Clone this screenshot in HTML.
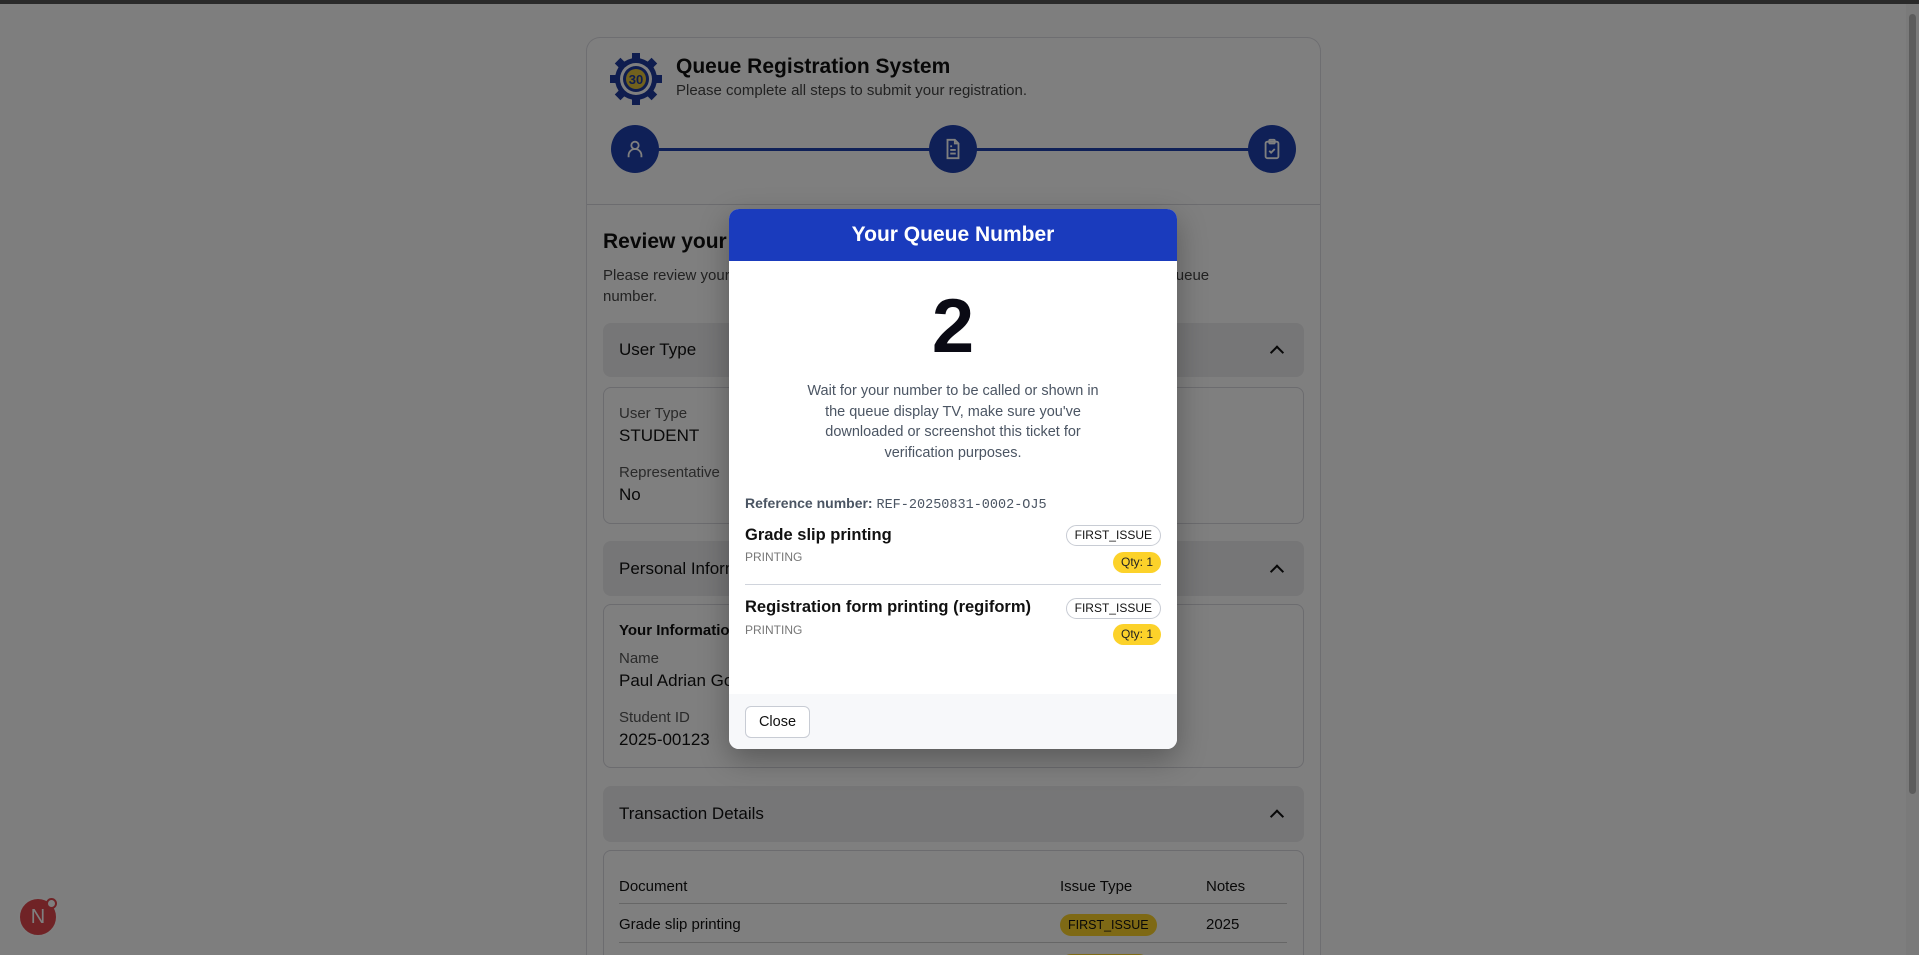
<!DOCTYPE html>
<html style="overflow:hidden;height:955px"><head><meta charset="utf-8"><style>
*{box-sizing:border-box;margin:0;padding:0}
body{width:1919px;height:955px;overflow:hidden;background:#fdfdfd;font-family:"Liberation Sans",sans-serif;color:#111;position:relative}
.topbar{position:absolute;left:0;top:0;width:1919px;height:4px;background:#555}
.scroll{position:absolute;right:0;top:4px;width:13px;height:951px;background:#f4f4f4}
.scroll div{position:absolute;left:3px;top:10px;width:7px;height:780px;background:#b8b8b8;border-radius:4px}
.card{position:absolute;left:586px;top:37px;width:735px;height:918px;border:1px solid #dcdce2;border-bottom:none;border-radius:14px 14px 0 0;background:#fff;overflow:hidden}
.abs{position:absolute}
.circle{position:absolute;width:48px;height:48px;border-radius:50%;background:#1e40af;top:87px;display:flex;align-items:center;justify-content:center}
.acc{position:absolute;left:16px;width:701px;background:#ececee;border-radius:8px;font-size:17px;padding-left:16px;display:flex;align-items:center}
.acc:after{content:"";position:absolute;right:22px;top:50%;width:8px;height:8px;border-left:2px solid #111;border-top:2px solid #111;transform:translateY(-25%) rotate(45deg)}
.box{position:absolute;left:16px;width:701px;border:1px solid #d8d8de;border-radius:8px}
.lbl{position:absolute;font-size:15px;color:#555}
.val{position:absolute;font-size:17px;color:#111}
.overlay{position:fixed;left:0;top:0;width:1919px;height:955px;background:rgba(0,0,0,.5)}
.modal{position:absolute;left:729px;top:209px;width:448px;height:540px;background:#fff;border-radius:10px;overflow:hidden;box-shadow:0 10px 30px rgba(0,0,0,.3)}
.mh{height:52px;background:#1a3bbd;color:#fff;font-weight:bold;font-size:21px;text-align:center;line-height:52px}
.badge{position:absolute;right:16px;height:21px;border-radius:11px;font-size:12px;line-height:19px;padding:0 8px}
.b1{border:1px solid #c8ccd4;color:#111;background:#fff}
.b2{background:#fcd22a;color:#222;line-height:21px}
</style></head><body>
<div class="card">
 <svg class="abs" style="left:23px;top:15px" width="52" height="52" viewBox="0 0 52 52"><g fill="#1e3a9e"><circle cx="26" cy="26" r="21"/><g id="t"><rect x="22" y="0" width="8" height="52"/><rect x="0" y="22" width="52" height="8"/></g><use href="#t" transform="rotate(45 26 26)"/></g><circle cx="26" cy="26" r="16" fill="#fff"/><circle cx="26" cy="26" r="13" fill="#1e3a9e"/><circle cx="26" cy="26" r="10" fill="#e2c23a"/><text x="26" y="31" font-size="13" font-weight="bold" text-anchor="middle" fill="#1e3a9e" font-family="Liberation Sans">30</text></svg>
 <div class="abs" style="left:89px;top:17px;font-size:21px;font-weight:600">Queue Registration System</div>
 <div class="abs" style="left:89px;top:44px;font-size:15px;color:#444">Please complete all steps to submit your registration.</div>
 <div class="abs" style="left:48px;top:110px;width:636px;height:3px;background:#1e40af"></div>
 <div class="circle" style="left:24px"><svg width="22" height="22" viewBox="0 0 24 24" fill="none" stroke="#fff" stroke-width="2"><circle cx="12" cy="8" r="4"/><path d="M5 21v-2a7 7 0 0 1 14 0v2"/></svg></div>
 <div class="circle" style="left:342px"><svg width="22" height="22" viewBox="0 0 24 24" fill="none" stroke="#fff" stroke-width="2"><path d="M14 2H6v20h12V6z"/><path d="M14 2v4h4M9 13h6M9 17h6M9 9h2"/></svg></div>
 <div class="circle" style="left:661px"><svg width="22" height="22" viewBox="0 0 24 24" fill="none" stroke="#fff" stroke-width="2"><rect x="5" y="4" width="14" height="18" rx="2"/><rect x="9" y="2" width="6" height="4" rx="1"/><path d="M9 14l2 2 4-4"/></svg></div>
 <div class="abs" style="left:0;top:166px;width:733px;height:1px;background:#d8d8de"></div>
 <div class="abs" style="left:16px;top:192px;font-size:21px;font-weight:600">Review your information</div>
 <div class="abs" style="left:16px;top:227px;width:655px;font-size:15px;line-height:21px;color:#444">Please review your information before submitting. Once submitted, you will receive a queue number.</div>
 <div class="acc" style="top:285px;height:54px">User Type</div>
 <div class="box" style="top:349px;height:137px"><div class="lbl" style="left:15px;top:17px">User Type</div><div class="val" style="left:15px;top:38px">STUDENT</div><div class="lbl" style="left:15px;top:76px">Representative</div><div class="val" style="left:15px;top:97px">No</div></div>
 <div class="acc" style="top:503px;height:55px">Personal Information</div>
 <div class="box" style="top:566px;height:164px"><div class="val" style="left:15px;top:17px;font-size:15px;font-weight:600">Your Information</div><div class="lbl" style="left:15px;top:45px">Name</div><div class="val" style="left:15px;top:66px">Paul Adrian Gonzales</div><div class="lbl" style="left:15px;top:104px">Student ID</div><div class="val" style="left:15px;top:125px">2025-00123</div></div>
 <div class="acc" style="top:748px;height:56px">Transaction Details</div>
 <div class="box" style="top:812px;height:120px;font-size:15px">
  <div class="abs" style="left:15px;top:27px">Document</div><div class="abs" style="left:456px;top:27px">Issue Type</div><div class="abs" style="left:602px;top:27px">Notes</div>
  <div class="abs" style="left:15px;top:52px;width:668px;height:1px;background:#ccc"></div>
  <div class="abs" style="left:15px;top:65px">Grade slip printing</div>
  <div class="abs" style="left:456px;top:63px;background:#fcd22a;border-radius:11px;padding:0 8px;font-size:12.5px;line-height:22px">FIRST_ISSUE</div>
  <div class="abs" style="left:602px;top:65px">2025</div>
  <div class="abs" style="left:15px;top:91px;width:668px;height:1px;background:#ccc"></div>
  <div class="abs" style="left:456px;top:103px;background:#fcd22a;border-radius:11px;width:90px;height:22px"></div>
 </div>
</div>
<div class="topbar"></div>
<div class="scroll"><div></div></div>
<div class="abs" style="left:18px;top:897px;width:40px;height:40px;border-radius:50%;background:#e0474c;border:2px solid #fff;color:#fff;font-size:20px;text-align:center;line-height:36px">N</div>
<div class="abs" style="left:46px;top:898px;width:11px;height:11px;border-radius:50%;background:#fff;border:2px solid #e0474c"></div>
<div class="overlay"></div>
<div class="modal">
 <div class="mh">Your Queue Number</div>
 <div style="text-align:center;font-size:76px;font-weight:900;margin-top:26px;line-height:80px;color:#0a0a14">2</div>
 <div style="width:305px;margin:14px auto 0;text-align:center;font-size:14.5px;line-height:20.5px;color:#4b5563">Wait for your number to be called or shown in the queue display TV, make sure you've downloaded or screenshot this ticket for verification purposes.</div>
 <div class="abs" style="left:16px;top:286px;font-size:14px;color:#4b5563;font-weight:600">Reference number: <span style="font-family:'Liberation Mono',monospace;font-weight:normal;font-size:13.5px">REF-20250831-0002-OJ5</span></div>
 <div class="abs" style="left:16px;top:317px;font-size:16.5px;font-weight:600">Grade slip printing</div>
 <div class="abs" style="left:16px;top:341px;font-size:12px;color:#777">PRINTING</div>
 <div class="badge b1" style="top:316px">FIRST_ISSUE</div>
 <div class="badge b2" style="top:343px">Qty: 1</div>
 <div class="abs" style="left:16px;top:375px;width:416px;height:1px;background:#d0d4dc"></div>
 <div class="abs" style="left:16px;top:389px;font-size:16.5px;font-weight:600">Registration form printing (regiform)</div>
 <div class="abs" style="left:16px;top:414px;font-size:12px;color:#777">PRINTING</div>
 <div class="badge b1" style="top:389px">FIRST_ISSUE</div>
 <div class="badge b2" style="top:415px">Qty: 1</div>
 <div class="abs" style="left:0;top:485px;width:448px;height:55px;background:#f7f8fa"></div>
 <div class="abs" style="left:16px;top:497px;width:65px;height:32px;border:1px solid #c8ccd4;border-radius:6px;background:#fff;font-size:14.5px;text-align:center;line-height:30px">Close</div>
</div>
</body></html>
